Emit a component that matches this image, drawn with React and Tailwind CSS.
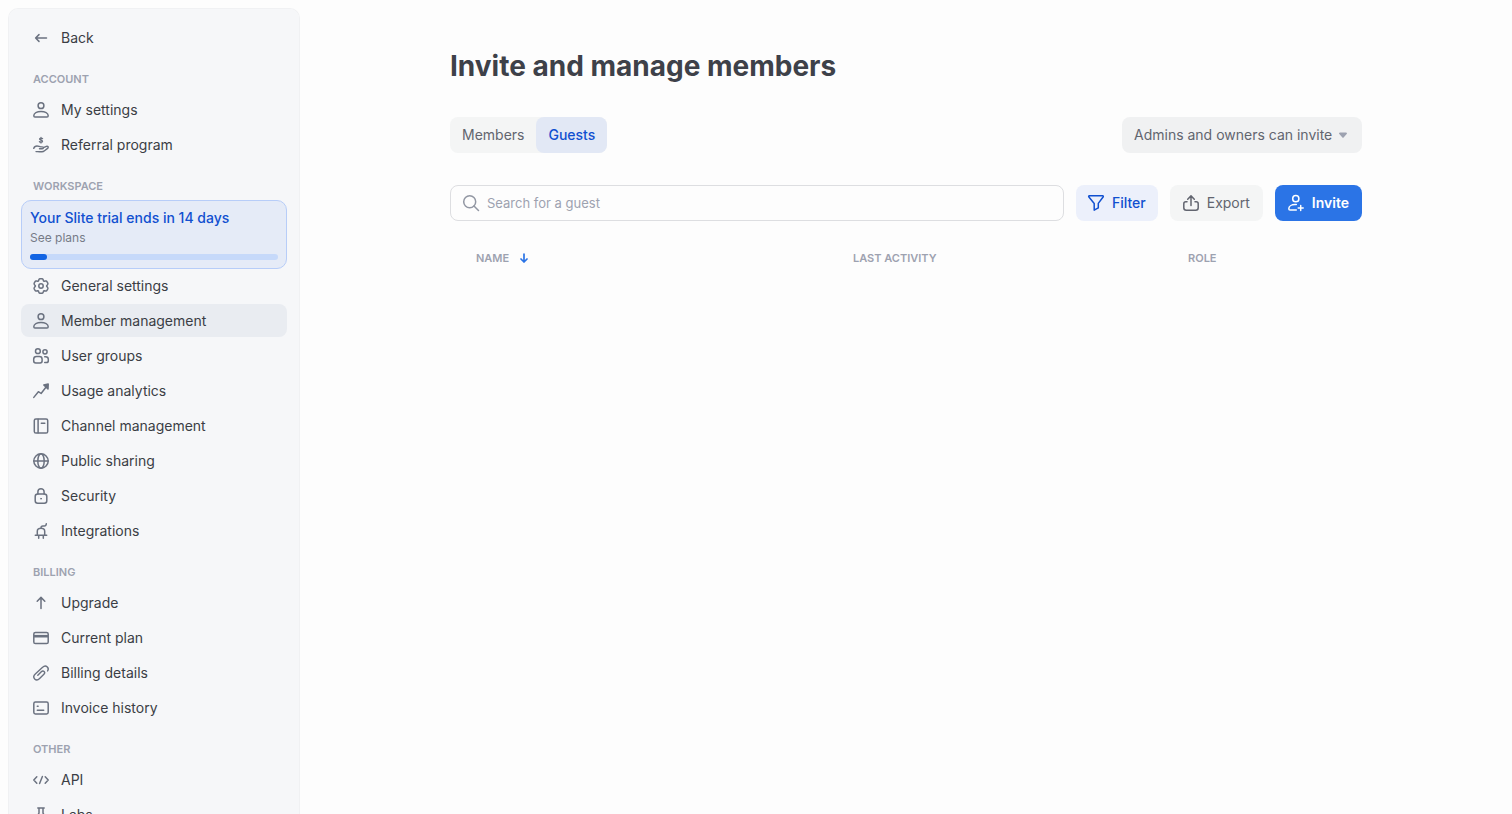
import React from "react";

function Icon({ children, size = "size-4", width = 1.5 }) {
  return (
    <svg
      className={`${size} shrink-0 overflow-visible`}
      viewBox="0 0 16 16"
      fill="none"
      stroke="currentColor"
      strokeWidth={width}
      strokeLinecap="round"
      strokeLinejoin="round"
      aria-hidden="true"
    >
      {children}
    </svg>
  );
}

// Six-lobed outline: flat lobes with narrower valleys between them.
const gearOutline = Array.from({ length: 72 }, (_, i) => {
  const a = (i * Math.PI) / 36;
  const r = 6.75 + 0.9 * Math.cos(6 * a) - 0.3 * Math.cos(12 * a);
  return `${(8 + r * Math.sin(a)).toFixed(2)},${(8 - r * Math.cos(a)).toFixed(2)}`;
}).join(" ");

const icons = {
  back: <path d="M13.500 8H2.600M6 4.600 2.600 8 6 11.400" />,
  person: (
    <>
      <circle cx="8" cy="3.700" r="2.900" />
      <path d="M8 9.400c-4 0-7.200 1.700-7.200 4.400 0 .8.500 1.300 1.200 1.300h12c.7 0 1.200-.5 1.200-1.300 0-2.700-3.200-4.400-7.200-4.400Z" />
    </>
  ),
  referral: (
    <>
      <path d="M9.600 1.700C9.200 1.200 8.700 1 8 1c-.9 0-1.500.4-1.500 1.100C6.500 3.600 9.600 2.700 9.600 4.300 9.600 5 8.900 5.400 8 5.400c-.7 0-1.300-.3-1.600-.8M8 .3v5.800" strokeWidth="1.200" />
      <path d="M.7 11.400c.6-1.700 1.800-2.400 3.300-2.400 1.700 0 2.300.9 3.800.9h1.400c.9 0 1.300.4 1.300.9s-.4 1-1.300 1H6.500M10.400 10.700l3-1.300c.9-.4 1.800.2 1.800.9 0 .5-.2.8-.6 1.100l-3.100 2.400c-.8.7-1.500 1-2.600 1-1.700 0-3-.2-4.400-.2H3" strokeWidth="1.400" />
    </>
  ),
  gear: (
    <>
      <circle cx="8" cy="8" r="2.200" />
      <polygon points={gearOutline} />
    </>
  ),
  groups: (
    <>
      <circle cx="4.900" cy="3.200" r="2.400" />
      <circle cx="12" cy="3.800" r="2.100" />
      <path d="M3.500 8.600h3c1.600 0 2.600 1 2.600 2.600v1.900c0 1.200-.8 1.900-2 1.900H2.700c-1.200 0-2-.7-2-1.900v-1.900c0-1.600 1.100-2.600 2.800-2.600ZM11.700 8.800h.9c1.700 0 2.700.9 2.700 2.400v1.500c0 1.200-.7 1.900-1.800 1.900h-1.800" />
    </>
  ),
  analytics: (
    <>
      <path d="m.8 14.400 4.600-5.700 2.700 1.800 4.800-6.300" />
      <path d="m10.800 2 4.400-.9-.2 4.800z" fill="currentColor" />
    </>
  ),
  channel: (
    <>
      <rect x="1.300" y="1" width="13.400" height="14" rx="1.600" />
      <path d="M5.100 1.300v13.400M8.300 5.200h3.500" />
    </>
  ),
  globe: (
    <>
      <circle cx="8" cy="8" r="7.200" />
      <ellipse cx="8" cy="8" rx="3.200" ry="7.200" />
      <path d="M.9 8h14.200" />
    </>
  ),
  lock: (
    <>
      <rect x="2.200" y="6" width="11.600" height="9.200" rx="2.500" />
      <path d="M4.900 5.900V3.800a3.100 3.100 0 0 1 6.200 0v2.100" />
      <circle cx="8" cy="10.700" r=".5" fill="currentColor" strokeWidth=".8" />
    </>
  ),
  plug: (
    <path d="M2.300 12.200h11.400M4.300 12V8.200c0-1.800 1.300-3 3.700-3s3.700 1.200 3.700 3V12M5.700 12.400v2.800M10.300 12.400v2.800M8 5c0-1.300.6-2 1.800-2h1.500c1.200 0 1.900-.7 2-2.200" />
  ),
  up: <path d="M8 13.600V2.500M4.200 6.200 8 2.400l3.800 3.800" />,
  card: (
    <>
      <rect x=".8" y="2.500" width="14.400" height="11" rx="1.600" />
      <path d="M1 6.200h14" strokeWidth="2.600" strokeLinecap="butt" />
    </>
  ),
  clip: (
    <path
      d="M14.600 5.900c.9-1.300.7-2.900-.3-3.900-1.300-1.300-3.200-1.200-4.700.3L2.300 8.900C.6 10.500.4 12.500 1.700 13.900c1.300 1.300 3.300 1.200 4.900-.4l4.300-4.200c.9-.9.9-2.100.2-2.800s-1.900-.7-2.800.2l-3.500 3.500"
      strokeWidth="1.400"
    />
  ),
  invoice: (
    <>
      <rect x=".8" y="2.100" width="14.400" height="11.800" rx="1.600" />
      <path d="M4.300 6.300h.8M4.300 10.300h6.400" />
    </>
  ),
  code: <path d="M3.800 4.800.8 8l3 3.200M12.200 4.800l3 3.200-3 3.200M9.400 4.500l-2.800 7" />,
  flask: <path d="M4.800.9h6.400M6 1.100v5L1.800 13c-.6 1.100 0 2 1.100 2h10.200c1.100 0 1.700-.9 1.100-2L10 6.100v-5" />,
};

const sections = [
  { title: "Account", items: [["My settings", "person"], ["Referral program", "referral"]] },
  {
    title: "Workspace",
    trial: true,
    items: [
      ["General settings", "gear"],
      ["Member management", "person"],
      ["User groups", "groups"],
      ["Usage analytics", "analytics"],
      ["Channel management", "channel"],
      ["Public sharing", "globe"],
      ["Security", "lock"],
      ["Integrations", "plug"],
    ],
  },
  {
    title: "Billing",
    items: [
      ["Upgrade", "up"],
      ["Current plan", "card"],
      ["Billing details", "clip"],
      ["Invoice history", "invoice"],
    ],
  },
  { title: "Other", items: [["API", "code"], ["Labs", "flask"]] },
];

function NavItem({ label, icon, active }) {
  return (
    <a
      href="#"
      aria-current={active ? "page" : undefined}
      className={`flex h-[33px] items-center gap-3 rounded-lg px-3 text-sm text-[#3b3e45] ${active ? "bg-[#e9ecf1]" : "hover:bg-[#eef0f4]"}`}
    >
      <span className="text-[#6b7280]">
        <Icon>{icons[icon]}</Icon>
      </span>
      {label}
    </a>
  );
}

function TrialCard() {
  return (
    <a href="#" className="block rounded-[10px] border border-[#b7cdf8] bg-[#e5ebf7] px-2 pt-[7px] pb-2">
      <span className="block text-sm leading-5 font-medium text-[#1150d0]">Your Slite trial ends in 14 days</span>
      <span className="block text-xs leading-5 text-[#767b87]">See plans</span>
      <span className="mt-[6px] block h-[6px] rounded-full bg-[#c6d9fa]">
        <span className="block h-full w-[7%] rounded-full bg-[#1264e3]" />
      </span>
    </a>
  );
}

function Sidebar() {
  return (
    <nav
      aria-label="Settings"
      className="mt-2 ml-2 w-[292px] shrink-0 overflow-y-auto rounded-t-[10px] border border-b-0 border-[#f0f1f3] bg-[#f6f7f9] px-3 pt-3 [scrollbar-width:none]"
    >
      <NavItem label="Back" icon="back" />
      {sections.map((section) => (
        <section key={section.title}>
          <h2 className="px-3 pt-[17px] pb-[6px] text-[11px] leading-4 font-semibold text-[#9da2b0] uppercase">{section.title}</h2>
          {section.trial && <TrialCard />}
          <ul className="flex flex-col gap-[2px]">
            {section.items.map(([label, icon]) => (
              <li key={label}>
                <NavItem label={label} icon={icon} active={label === "Member management"} />
              </li>
            ))}
          </ul>
        </section>
      ))}
    </nav>
  );
}

export default function App() {
  return (
    <div className="flex h-screen overflow-hidden bg-[#fdfdfd] font-[Inter,sans-serif] text-[#3b3e45]">
      <Sidebar />
      <main className="min-w-0 flex-1 overflow-y-auto px-6 pt-12">
        <div className="mx-auto max-w-[912px]">
          <h1 className="text-[28px] leading-9 font-bold text-[#3e4149]">Invite and manage members</h1>

          <div className="mt-[33px] flex items-center justify-between">
            <div role="tablist" className="flex rounded-lg bg-[#f4f5f5] text-sm">
              <button type="button" role="tab" aria-selected="false" className="h-9 rounded-lg px-3 text-[#62656f]">Members</button>
              <button type="button" role="tab" aria-selected="true" className="h-9 rounded-lg bg-[#e2e8f5] px-3 font-medium text-[#1150d0]">Guests</button>
            </div>
            <div className="relative text-sm text-[#62656f]">
              <select aria-label="Who can invite" className="h-9 w-[240px] appearance-none rounded-lg bg-[#f0f1f2] pr-7 pl-3">
                <option>Admins and owners can invite</option>
              </select>
              <svg className="pointer-events-none absolute top-[14px] right-[14px] h-2 w-[10px] text-[#9da2b0]" viewBox="0 0 10 8" fill="currentColor" aria-hidden="true">
                <path d="M2 1.500h6c.9 0 1.300.8.7 1.500L5.800 6.300a1 1 0 0 1-1.600 0L1.300 3C.7 2.300 1.100 1.500 2 1.500Z" />
              </svg>
            </div>
          </div>

          <div className="mt-8 flex gap-3 text-sm">
            <label className="flex h-9 min-w-0 flex-1 items-center gap-2 rounded-lg border border-[#dddee1] px-3 text-[#9297a3]">
              <Icon>
                <circle cx="6.700" cy="6.700" r="6" />
                <path d="m11 11 4.500 4.500" />
              </Icon>
              <input type="text" aria-label="Search for a guest" placeholder="Search for a guest" className="min-w-0 flex-1 bg-transparent text-[13px] text-[#3b3e45] outline-none placeholder:text-[#9da2b0]" />
            </label>
            <button type="button" className="flex h-9 items-center gap-2 rounded-lg bg-[#ecf0fb] px-3 font-medium text-[#1150d0]">
              <Icon><path d="M1.300.8h13.400c.6 0 .8.6.4 1.200l-4.800 6.400v4.500L6.200 15.200V8.400L.9 2C.4 1.400.7.8 1.300.8Z" /></Icon>
              Filter
            </button>
            <button type="button" className="flex h-9 items-center gap-2 rounded-lg bg-[#f4f5f5] px-[13px] text-[#62656f]">
              <Icon><path d="M8 10.400V.9M4.700 4.200 8 .9l3.300 3.300M4 6.700H2.800C1.600 6.700.8 7.500.8 8.700v4c0 1.600.9 2.500 2.500 2.500h9.400c1.600 0 2.500-.9 2.500-2.500v-4c0-1.200-.8-2-2-2H12" /></Icon>
              Export
            </button>
            <button type="button" className="flex h-9 items-center gap-2 rounded-lg bg-[#2b74e6] px-[13px] font-semibold text-white">
              <Icon>
                <circle cx="7.800" cy="3.700" r="3.100" />
                <path d="M8.300 9.600H7c-3.500 0-6.200 1.700-6.200 4.200 0 .8.400 1.300 1.200 1.300h6.300M12.700 10.400v5M10.200 12.900h5" />
              </Icon>
              Invite
            </button>
          </div>

          <table className="mt-[27px] w-full table-fixed text-left text-[11px] leading-5 text-[#9da2b0]">
            <thead>
              <tr>
                <th scope="col" aria-sort="ascending" className="w-[403px] pl-[26px] font-semibold">
                  <button type="button" className="flex items-center gap-[11px] uppercase">
                    Name
                    <svg className="h-[10px] w-2 text-[#2b74e6]" viewBox="0 0 8 10" fill="none" stroke="currentColor" strokeWidth="1.700" strokeLinecap="round" strokeLinejoin="round" aria-hidden="true">
                      <path d="M4 1v8M1 6l3 3 3-3" />
                    </svg>
                  </button>
                </th>
                <th scope="col" className="font-semibold uppercase">Last activity</th>
                <th scope="col" className="w-[174px] font-semibold uppercase">Role</th>
              </tr>
            </thead>
          </table>
        </div>
      </main>
    </div>
  );
}
